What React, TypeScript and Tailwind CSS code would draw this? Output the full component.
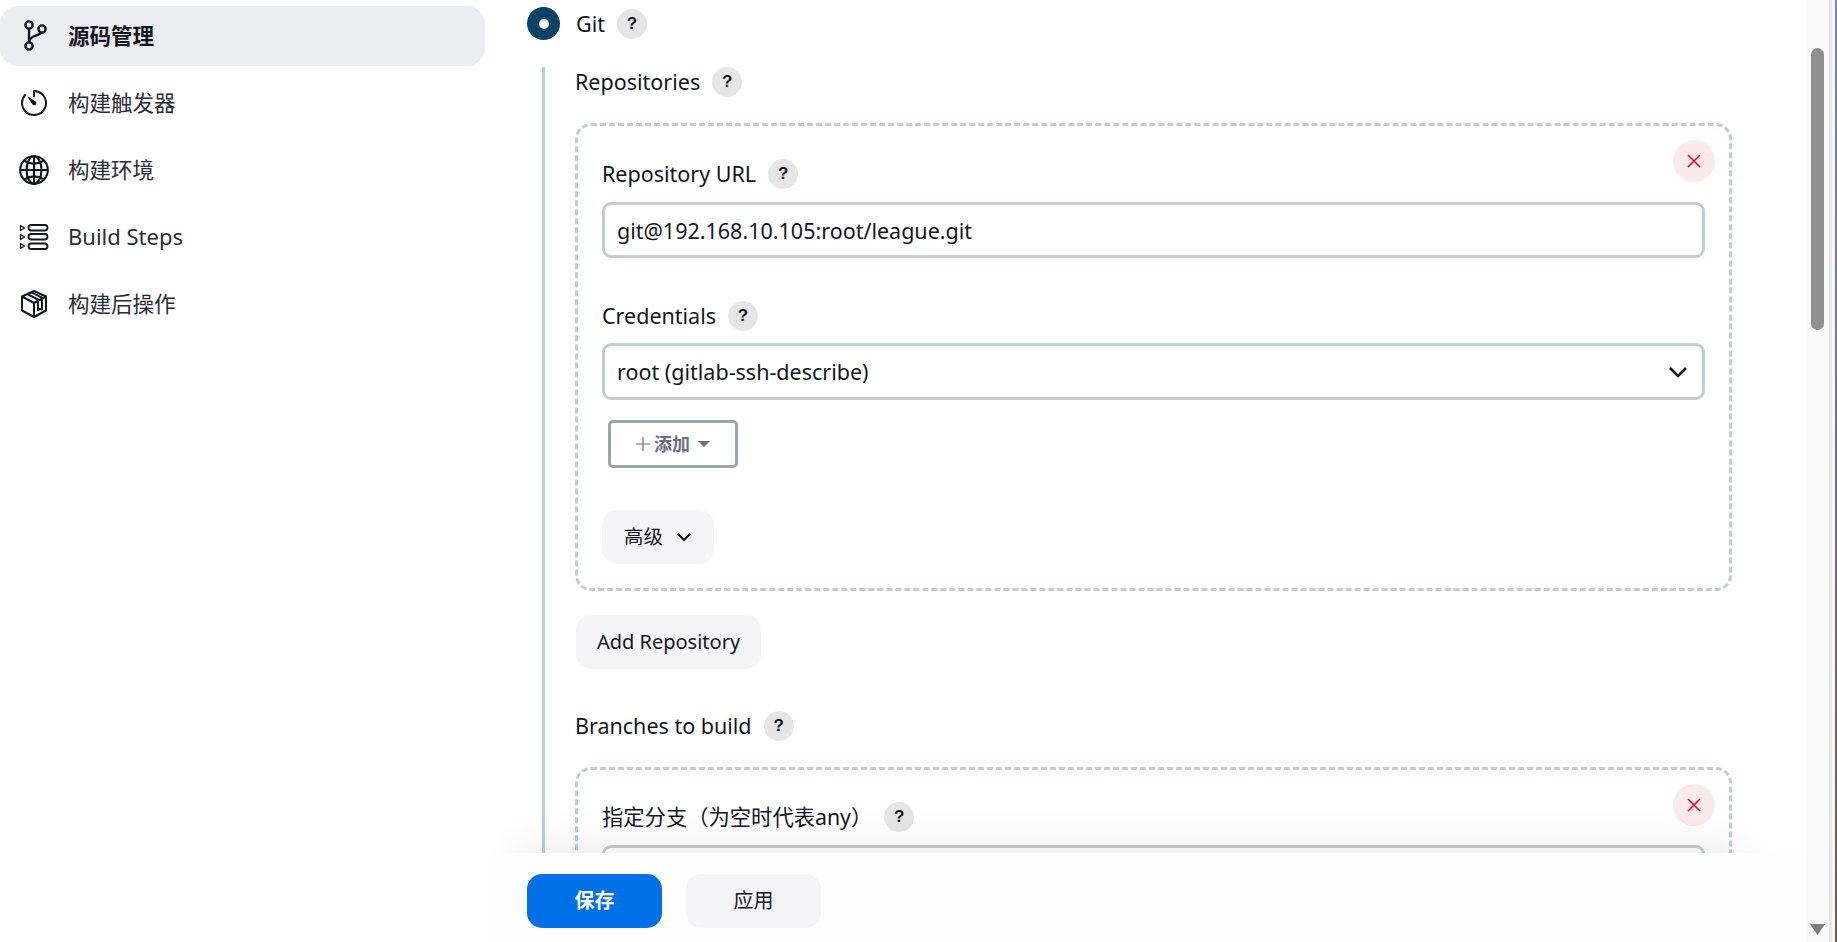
import React from 'react';

const cjk = "font-['Noto_Sans','Noto_Sans_CJK_SC',sans-serif]";

function GitIcon() {
    return (
        <svg width="32" height="40" viewBox="0 0 32 40" fill="none" stroke="#14141f" strokeWidth="2.4">
            <circle cx="8" cy="7" r="3.6" />
            <circle cx="21" cy="11" r="3.6" />
            <circle cx="8" cy="28" r="3.6" />
            <path d="M8 10.6V24.4" />
            <path d="M8 24c1-4 3-5 7-6.5 3-1 5-2 5.6-3.5" />
        </svg>
    );
}

function TimerIcon() {
    return (
        <svg width="32" height="32" viewBox="0 0 512 512" fill="none" stroke="#14141f" strokeWidth="32" strokeLinecap="round" strokeLinejoin="round">
            <path d="M112.91 128A191.85 191.85 0 0064 254c-1.18 106.35 85.65 193.8 192 194 106.2.2 192-85.83 192-192 0-104.54-83.55-189.61-187.5-192a4.36 4.36 0 00-4.5 4.37V152" />
            <path fill="#14141f" stroke="none" d="M233.38 278.63l-79-113a8.13 8.13 0 0111.32-11.32l113 79a32.5 32.5 0 01-37.25 53.26 33.21 33.21 0 01-8.07-7.94z" />
        </svg>
    );
}

function GlobeIcon() {
    return (
        <svg width="34" height="34" viewBox="0 0 512 512" fill="none" stroke="#14141f" strokeWidth="32" strokeMiterlimit="10">
            <path d="M256 48C141.13 48 48 141.13 48 256s93.13 208 208 208 208-93.13 208-208S370.87 48 256 48z" />
            <path d="M256 48c-58.07 0-112.67 93.13-112.67 208S197.93 464 256 464s112.67-93.13 112.67-208S314.07 48 256 48z" />
            <path d="M117.33 117.33c38.24 27.15 86.38 43.34 138.67 43.34s100.43-16.19 138.67-43.34M394.67 394.67c-38.24-27.15-86.38-43.34-138.67-43.34s-100.43 16.19-138.67 43.34" />
            <path d="M256 48v416M464 256H48" />
        </svg>
    );
}

function StepsIcon() {
    return (
        <svg width="30" height="28" viewBox="0 0 30 28" fill="none" stroke="#14141f" strokeWidth="1.8" strokeLinejoin="round">
            <path d="M1.5 2.5l4 2.5-4 2.5zM1.5 11.5l4 2.5-4 2.5zM1.5 20.5l4 2.5-4 2.5z" strokeWidth="1.3" />
            <rect x="9.5" y="2" width="19" height="5.5" rx="2.7" />
            <rect x="9.5" y="11" width="19" height="5.5" rx="2.7" />
            <rect x="9.5" y="20.5" width="19" height="5.5" rx="2.7" />
        </svg>
    );
}

function BoxIcon() {
    return (
        <svg width="30" height="30" viewBox="0 0 30 30" fill="none" stroke="#14141f" strokeWidth="2" strokeLinejoin="round">
            <path d="M15 2L27 7.5V21.5L15 28L3 21.5V7.5Z" />
            <path d="M3 7.5L15 14L27 7.5" />
            <path d="M15 14V28" />
            <path d="M8 4.8L20 11M12 3.2L24 9.2" />
            <path d="M19 12V21L21 20L23 20.5V10" />
        </svg>
    );
}

function Help({ className = '' }: { className?: string }) {
    return (
        <span className={`flex size-[30px] items-center justify-center rounded-full bg-[#e6e6e7] font-['Liberation_Sans',sans-serif] text-[17px] font-bold text-[#14141f] ${className}`}>
            ?
        </span>
    );
}

function Label({ text, size = 'text-[21.5px]' }: { text: string; size?: string }) {
    return (
        <div className="flex h-[30px] items-center">
            <span className={`${size} text-[#14141f]`}>{text}</span>
            <Help className="ml-[12px]" />
        </div>
    );
}

function CloseButton() {
    return (
        <span className="absolute right-[14px] top-[14px] flex size-[42px] items-center justify-center rounded-full bg-[#fbeaec]">
            <svg width="14" height="14" viewBox="0 0 14 14" stroke="#e6002e" strokeWidth="1.5">
                <path d="M1 1L13 13M13 1L1 13" />
            </svg>
        </span>
    );
}

const sideItems = [
    { label: '构建触发器', icon: <TimerIcon /> },
    { label: '构建环境', icon: <GlobeIcon /> },
    { label: 'Build Steps', icon: <StepsIcon />, latin: true },
    { label: '构建后操作', icon: <BoxIcon /> },
];

export default function App() {
    return (
        <div className={`flex h-[942px] w-full overflow-hidden bg-white ${cjk} text-[#14141f]`}>
            {/* Sidebar */}
            <aside className="flex w-[485px] shrink-0 flex-col gap-[7px] pt-[6px]">
                <div className="flex h-[60px] items-center rounded-[18px] bg-[#ecedf2]">
                    <span className="flex w-[68px] justify-center pl-[5px] pt-[4px]">
                        <GitIcon />
                    </span>
                    <span className="text-[21.5px] font-bold">源码管理</span>
                </div>
                {sideItems.map((item) => (
                    <div key={item.label} className="flex h-[60px] items-center">
                        <span className="flex w-[68px] justify-center">{item.icon}</span>
                        <span className={item.latin ? 'pb-[2px] text-[22px] text-[#2b2b38]' : 'text-[21.5px] text-[#2b2b38]'}>{item.label}</span>
                    </div>
                ))}
            </aside>

            {/* Main form */}
            <main className="relative min-w-0 flex-1 overflow-hidden pl-[42px]">
                <div className="flex items-center pt-[7px]">
                    <span className="flex size-[33px] items-center justify-center rounded-full bg-[#0b4266]">
                        <span className="size-[10px] rounded-full bg-white" />
                    </span>
                    <span className="ml-[16px] text-[21.5px] leading-[30px]">Git</span>
                    <Help className="ml-[12px]" />
                </div>

                <div className="ml-[15px] mt-[27px] border-l-[3px] border-[#c3ccd1] pl-[30px]">
                    <Label text="Repositories" />

                    <div className="relative mt-[26px] w-[1157px] rounded-[16px] border-[3px] border-dashed border-[#c3ccd1] pb-[24px] pl-[24px] pr-[24px] pt-[33px]">
                        <CloseButton />
                        <Label text="Repository URL" />
                        <input
                            readOnly
                            value="git@192.168.10.105:root/league.git"
                            className="mt-[13px] block h-[56px] w-full rounded-[9px] border-[3px] border-[#c3ccd1] px-[12px] text-[21.5px] outline-none"
                        />
                        <div className="mt-[43px]">
                            <Label text="Credentials" />
                        </div>
                        <div className="mt-[12px] flex h-[57px] items-center justify-between rounded-[9px] border-[3px] border-[#c3ccd1] pl-[12px] pr-[14px] text-[21.5px]">
                            <span className="pt-[2px]">root (gitlab-ssh-describe)</span>
                            <svg width="20" height="12" viewBox="0 0 20 12" fill="none" stroke="#14141f" strokeWidth="2.6">
                                <path d="M2 2L10 10L18 2" />
                            </svg>
                        </div>
                        <button className="ml-[6px] mt-[20px] flex h-[48px] w-[130px] items-center justify-center rounded-[5px] border-[3px] border-[#9aa6ae] text-[18px] font-bold text-[#6d6b85]">
                            <svg className="mr-[4px]" width="14" height="14" viewBox="0 0 14 14" stroke="#6d6b85" strokeWidth="1.2">
                                <path d="M7 0V14M0 7H14" />
                            </svg>
                            添加
                            <span className="ml-[8px] border-x-[6px] border-t-[6px] border-x-transparent border-t-[#6d6b85]" />
                        </button>
                        <button className="mt-[42px] flex h-[54px] w-[112px] items-center justify-center gap-[13px] rounded-[15px] bg-[#f5f5f8] text-[19.5px]">
                            高级
                            <svg width="16" height="10" viewBox="0 0 16 10" fill="none" stroke="#14141f" strokeWidth="2">
                                <path d="M1.5 1.5L8 8L14.5 1.5" />
                            </svg>
                        </button>
                    </div>

                    <button className="ml-[1px] mt-[24px] flex h-[54px] w-[185px] items-center justify-center rounded-[15px] bg-[#f5f5f8] text-[20px]">
                        Add Repository
                    </button>

                    <div className="mt-[42px]">
                        <Label text="Branches to build" />
                    </div>

                    <div className="relative mt-[26px] w-[1157px] rounded-[16px] border-[3px] border-dashed border-[#c3ccd1] pb-[24px] pl-[24px] pr-[24px] pt-[32px]">
                        <CloseButton />
                        <Label text="指定分支（为空时代表any）" size="text-[21.3px]" />
                        <div className="mt-[13px] h-[56px] rounded-[9px] border-[3px] border-[#c3ccd1]" />
                    </div>
                </div>

                {/* Sticky save bar, the shadow strip sits behind it */}
                <div className="absolute bottom-[60px] left-[40px] h-[29px] w-[1210px] rounded-[10px] shadow-[0_0_40px_10px_rgba(20,20,40,0.07)]" />
                <div className="absolute inset-x-0 bottom-0 flex h-[89px] gap-[24px] bg-[#fefefe] pl-[42px] pt-[21px]">
                    <button className="h-[54px] w-[135px] rounded-[15px] bg-[#0070e6] text-[20px] font-bold text-white">保存</button>
                    <button className="h-[54px] w-[135px] rounded-[15px] bg-[#f5f5f8] text-[20px]">应用</button>
                </div>
            </main>

            {/* Scrollbar */}
            <div className="relative w-[23px] shrink-0 bg-[#fafafa] pt-[48px]">
                <div className="ml-[5px] h-[282px] w-[13px] rounded-full bg-[#8f8f8f]" />
                <svg className="absolute bottom-[7px] left-[4px]" width="15" height="11" viewBox="0 0 15 11" fill="#7f7f7f">
                    <path d="M0 0H15L7.5 11Z" />
                </svg>
            </div>

            {/* Window edge */}
            <div className="w-[3px] shrink-0 bg-[#e8e8e8]" />
            <div className="w-[3px] shrink-0 bg-[#f7f7f7]" />
            <div className="w-[2px] shrink-0 bg-gradient-to-b from-[#7d84ad] to-[#6a5a4e]" />
        </div>
    );
}
